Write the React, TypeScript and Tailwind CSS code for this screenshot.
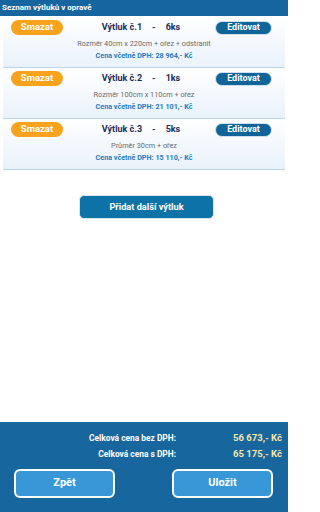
import React from "react";

const items = [
  { n: 1, ks: 6, desc: "Rozměr 40cm x 220cm + ořez + odstranit", price: "28 964,- Kč" },
  { n: 2, ks: 1, desc: "Rozměr 100cm x 110cm + ořez", price: "21 101,- Kč" },
  { n: 3, ks: 5, desc: "Průměr 30cm + ořez", price: "15 110,- Kč" },
];

function Item({ n, ks, desc, price }: { n: number; ks: number; desc: string; price: string }) {
  return (
    <div className="mx-[3px] h-[51px] border-b border-[#b9d3ea] bg-gradient-to-b from-white to-[#e9f2fb] pt-[3px]">
      <div className="flex h-[15px] items-center">
        <button className="ml-[8px] flex h-[15px] w-[52px] items-center justify-center rounded-full bg-[#f9a21b] text-[9.5px] font-bold text-white">
          Smazat
        </button>
        <div className="flex flex-1 items-center justify-center pl-[4px] text-[9px] font-bold text-[#1d2b59]">
          <span>Výtluk č.{n}</span>
          <span className="mx-[10px]">-</span>
          <span>{ks}ks</span>
        </div>
        <button className="mr-[13px] flex h-[14px] w-[57px] items-center justify-center rounded-full border border-[#cfe0ee] bg-[#0f6597] text-[9px] font-bold text-white">
          Editovat
        </button>
      </div>
      <div className="mt-[3px] text-center text-[7.3px] leading-[12px] text-[#6a6a6a]">{desc}</div>
      <div className="text-center text-[7.2px] font-bold leading-[12px] text-[#1f7cc0]">
        Cena včetně DPH: {price}
      </div>
    </div>
  );
}

export default function App() {
  return (
    <div className="flex h-[512px] w-[288px] flex-col bg-white" style={{ fontFamily: "Roboto, 'Noto Sans', sans-serif" }}>
      <div className="flex h-[16px] items-center bg-[#17659e] pl-[2px] text-[8px] font-bold text-white">
        Seznam výtluků v opravě
      </div>
      <div className="flex-1 pt-[1px]">
        {items.map((it) => (
          <Item key={it.n} {...it} />
        ))}
        <div className="mt-[25px] flex justify-center">
          <button className="ml-[5px] flex h-[24px] w-[135px] items-center justify-center rounded-[5px] border border-[#d6e6f2] bg-[#0d72a6] text-[9.2px] font-bold text-white">
            Přidat další výtluk
          </button>
        </div>
      </div>
      <div className="h-[90px] bg-[#18669e] pt-[8px]">
        <div className="flex font-bold leading-[16px]">
          <div className="w-[176px] text-right text-[8.4px] text-white">
            <div>Celková cena bez DPH:</div>
            <div>Celková cena s DPH:</div>
          </div>
          <div className="flex-1 pr-[6px] text-right text-[9.5px] text-[#f5e7a8]">
            <div>56 673,- Kč</div>
            <div>65 175,- Kč</div>
          </div>
        </div>
        <div className="mt-[7px] flex justify-between pl-[14px] pr-[15px]">
          <button className="h-[29px] w-[101px] rounded-[6px] border-2 border-white bg-[#3898d7] text-[11px] font-bold text-white">
            Zpět
          </button>
          <button className="h-[29px] w-[101px] rounded-[6px] border-2 border-white bg-[#3898d7] text-[11px] font-bold text-white">
            Uložit
          </button>
        </div>
      </div>
    </div>
  );
}
